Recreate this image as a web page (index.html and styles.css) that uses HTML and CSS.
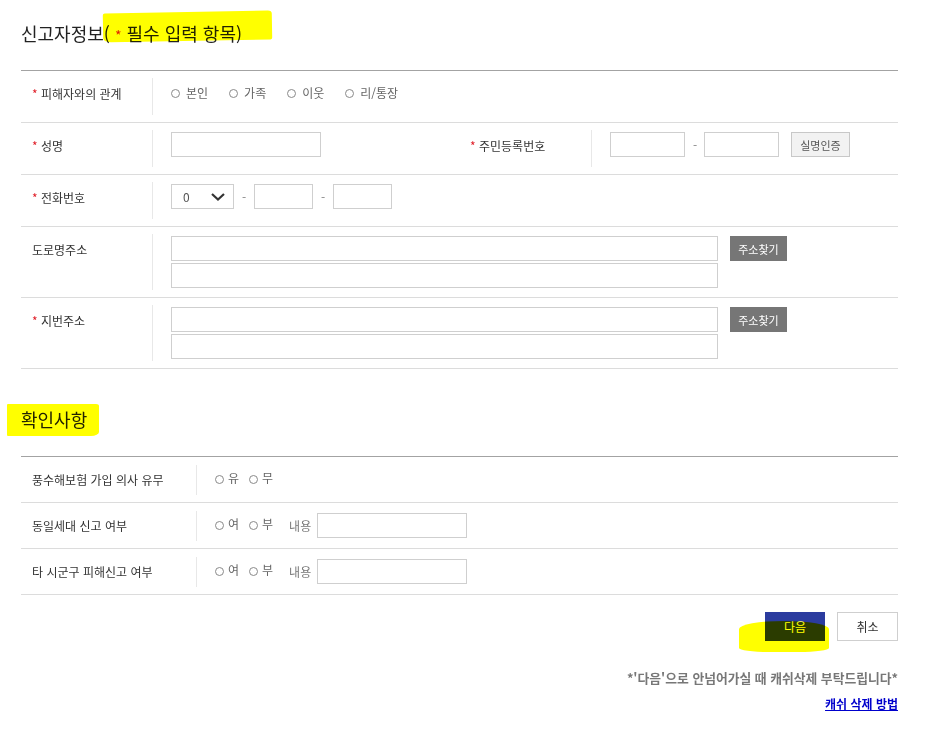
FILE: index.html
```html
<!DOCTYPE html>
<html lang="ko">
<head>
<meta charset="utf-8">
<title>신고자정보</title>
<link rel="stylesheet" href="styles.css">
</head>
<body>
<div class="page">
  <h2 class="sec-title">신고자정보<span class="hl hl-title">( <span class="req">*</span> 필수 입력 항목)</span></h2>
  <div class="tbl">
    <div class="row">
      <div class="th"><span class="req">*</span> 피해자와의 관계</div>
      <div class="td">
        <div class="radios wide">
          <span class="rd"><i></i>본인</span>
          <span class="rd"><i></i>가족</span>
          <span class="rd"><i></i>이웃</span>
          <span class="rd"><i></i>리/통장</span>
        </div>
      </div>
    </div>
    <div class="row">
      <div class="th"><span class="req">*</span> 성명</div>
      <div class="td half">
        <input class="inp w150" type="text">
      </div>
      <div class="th th2"><span class="req">*</span> 주민등록번호</div>
      <div class="td">
        <input class="inp w75" type="text">
        <span class="dash dash-tight">-</span>
        <input class="inp w75" type="text">
        <button class="btn-gray" type="button">실명인증</button>
      </div>
    </div>
    <div class="row">
      <div class="th"><span class="req">*</span> 전화번호</div>
      <div class="td">
        <div class="sel"><span>0</span><svg width="14" height="8" viewBox="0 0 14 8"><path d="M1 1l6 5.5L13 1" fill="none" stroke="#333" stroke-width="2.2"/></svg></div>
        <span class="dash">-</span>
        <input class="inp w59" type="text">
        <span class="dash">-</span>
        <input class="inp w59" type="text">
      </div>
    </div>
    <div class="row">
      <div class="th">도로명주소</div>
      <div class="td">
        <div class="addr">
          <input class="inp w547" type="text">
          <input class="inp w547" type="text">
        </div>
        <button class="btn-dark" type="button">주소찾기</button>
      </div>
    </div>
    <div class="row">
      <div class="th"><span class="req">*</span> 지번주소</div>
      <div class="td">
        <div class="addr">
          <input class="inp w547" type="text">
          <input class="inp w547" type="text">
        </div>
        <button class="btn-dark" type="button">주소찾기</button>
      </div>
    </div>
  </div>

  <h2 class="sec-title sec2"><span class="hl hl-sec2">확인사항</span></h2>
  <div class="tbl tbl2">
    <div class="row">
      <div class="th">풍수해보험 가입 의사 유무</div>
      <div class="td">
        <div class="radios narrow">
          <span class="rd"><i></i>유</span>
          <span class="rd"><i></i>무</span>
        </div>
      </div>
    </div>
    <div class="row">
      <div class="th">동일세대 신고 여부</div>
      <div class="td">
        <div class="radios narrow">
          <span class="rd"><i></i>여</span>
          <span class="rd"><i></i>부</span>
        </div>
        <span class="memo">내용</span>
        <input class="inp w150" type="text">
      </div>
    </div>
    <div class="row">
      <div class="th">타 시군구 피해신고 여부</div>
      <div class="td">
        <div class="radios narrow">
          <span class="rd"><i></i>여</span>
          <span class="rd"><i></i>부</span>
        </div>
        <span class="memo">내용</span>
        <input class="inp w150" type="text">
      </div>
    </div>
  </div>

  <div class="actions">
    <button class="btn-next" type="button">다음</button>
    <button class="btn-cancel" type="button">취소</button>
  </div>
  <p class="notice">*'다음'으로 안넘어가실 때 캐쉬삭제 부탁드립니다*</p>
  <p class="help"><a href="#" class="help-link">캐쉬 삭제 방법</a></p>
</div>
</body>
</html>
```
FILE: styles.css
```css
* { box-sizing: border-box; }
html, body { margin: 0; padding: 0; background: #fff; }
body {
  font-family: "Noto Sans CJK KR", "Noto Sans", sans-serif;
  color: #333;
}
.page {
  width: 877px;
  margin-left: 21px;
}
.sec-title {
  margin: 0;
  padding-top: 20px;
  height: 70px;
  font-size: 18px;
  font-weight: normal;
  line-height: 26px;
  color: #222;
}
.sec-title.sec2 {
  padding-top: 0;
  height: 26px;
  margin: 37px 0 24px;
}
.req { color: #e0202a; }
.sec-title .req { font-size: 14px; line-height: 1; }

/* marker highlights */
.hl { position: relative; }
.hl::after {
  content: "";
  position: absolute;
  background: #ffff00;
  mix-blend-mode: multiply;
  pointer-events: none;
}
.hl-title::after {
  left: -1px;
  top: -8px;
  width: 169px;
  height: 29px;
  border-radius: 2px 4px 2px 8px / 2px 3px 2px 4px;
  transform: rotate(-1deg);
}
.hl-sec2::after {
  left: -14px;
  top: -2px;
  width: 92px;
  height: 32px;
  border-radius: 1px 3px 8px 1px / 1px 2px 4px 1px;
}

.tbl { border-top: 1px solid #a3a3a3; }
.row {
  display: flex;
  border-bottom: 1px solid #dcdcdc;
  padding: 7px 0 7px;
}
.th {
  width: 131px;
  flex: none;
  padding: 6px 0 0 11px;
  font-size: 12px;
  line-height: 20px;
  color: #333;
}
.th .req { font-size: 12px; }
.th.th2 { width: 132px; }
.td {
  flex: 1;
  display: flex;
  align-items: flex-start;
  min-height: 37px;
  padding: 2px 0 2px 18px;
  border-left: 1px solid #e8e8e8;
}
.td.half { flex: none; width: 307px; }

.inp {
  height: 25px;
  border: 1px solid #cfcfcf;
  background: #fff;
  margin: 0;
  padding: 0 6px;
  font: inherit;
}
.w150 { width: 150px; }
.w75 { width: 75px; }
.w59 { width: 59px; }
.w547 { width: 547px; }

.dash {
  width: 4px;
  margin: 0 8px;
  font-size: 12px;
  line-height: 25px;
  color: #888;
  text-align: center;
}
.dash.dash-tight { margin: 0 7px 0 8px; }

.btn-gray {
  margin-left: 12px;
  width: 59px;
  height: 25px;
  border: 1px solid #c8c8c8;
  background: #f2f2f2;
  color: #555;
  font: 11px "Noto Sans CJK KR", sans-serif;
  padding: 0;
}

.sel {
  width: 63px;
  height: 25px;
  border: 1px solid #cfcfcf;
  display: flex;
  align-items: center;
  justify-content: space-between;
  padding: 0 8px 0 11px;
  font-size: 12px;
  color: #555;
}

.addr {
  display: flex;
  flex-direction: column;
  gap: 2px;
}
.btn-dark {
  margin-left: 12px;
  width: 57px;
  height: 25px;
  border: none;
  background: #767676;
  color: #fff;
  font: 11px "Noto Sans CJK KR", sans-serif;
  padding: 0;
}

.radios {
  display: flex;
  font-size: 12px;
  color: #666;
  line-height: 20px;
}
.radios.wide { gap: 21px; padding-top: 3px; }
.radios.narrow { gap: 10px; padding-top: 1px; }
.rd { display: inline-flex; align-items: center; }
.rd i {
  display: inline-block;
  width: 9px;
  height: 9px;
  border: 1px solid #8a8a8a;
  border-radius: 50%;
  margin-right: 6px;
}
.radios.narrow .rd i { margin-right: 4px; margin-top: 3px; }

.tbl2 .row { padding: 8px 0 7px; }
.tbl2 .th { width: 175px; padding-top: 5px; }
.tbl2 .td { min-height: 30px; }
.memo {
  margin: 0 6px 0 16px;
  font-size: 12px;
  color: #777;
  line-height: 25px;
}

.actions {
  display: flex;
  justify-content: flex-end;
  gap: 12px;
  margin-top: 17px;
}
.btn-next, .btn-cancel {
  height: 29px;
  font: 12px "Noto Sans CJK KR", sans-serif;
  padding: 0;
}
.btn-next {
  position: relative;
  width: 60px;
  border: none;
  background: #2b3c9f;
  color: #fff;
}
.btn-next::after {
  content: "";
  position: absolute;
  left: -26px;
  top: 9px;
  width: 90px;
  height: 31px;
  background: #ffff00;
  mix-blend-mode: multiply;
  border-radius: 45px 45px 30px 30px / 8px 8px 4px 4px;
  pointer-events: none;
}
.btn-cancel {
  width: 61px;
  border: 1px solid #cfcfcf;
  background: #fff;
  color: #333;
}
.notice {
  margin: 27px 0 0;
  text-align: right;
  font-size: 12.8px;
  font-weight: bold;
  line-height: 20px;
  color: #777;
}
.help {
  margin: 6px 0 0;
  text-align: right;
  font-size: 12px;
  font-weight: bold;
  line-height: 20px;
}
.help-link { color: #0000cc; text-decoration: underline; }
```
